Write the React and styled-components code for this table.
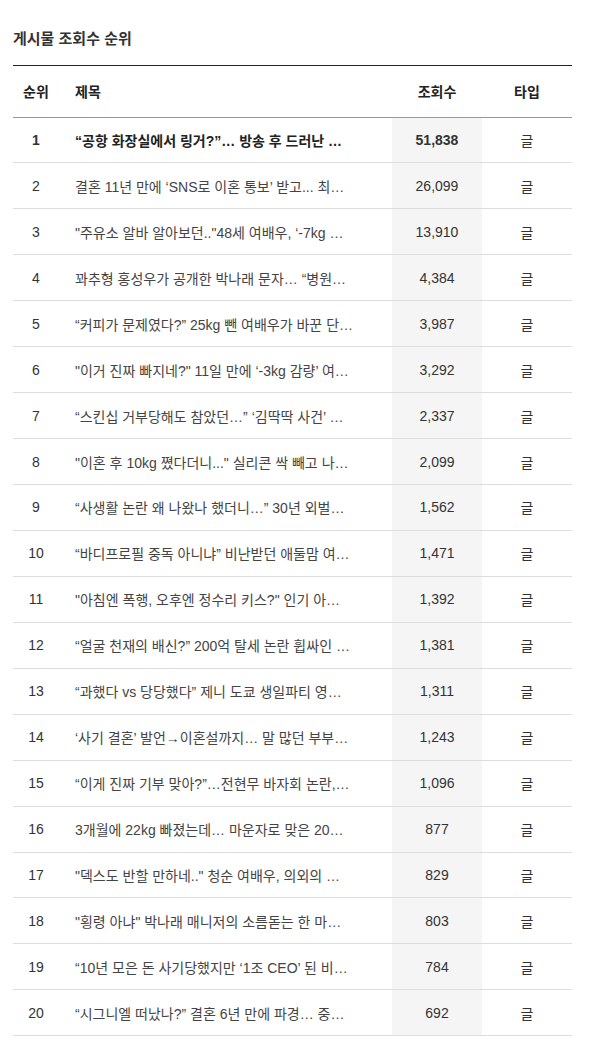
import React from 'react';
import styled, { createGlobalStyle } from 'styled-components';

const GlobalStyle = createGlobalStyle`
  body {
    margin: 0;
    background: #fff;
    font-family: "Liberation Sans", "Noto Sans CJK KR", Arial, sans-serif;
    color: #333;
  }
`;

const rows = [
  ['“공항 화장실에서 링거?”… 방송 후 드러난 …', '51,838'],
  ['결혼 11년 만에 ‘SNS로 이혼 통보’ 받고... 최…', '26,099'],
  ['"주유소 알바 알아보던.."48세 여배우, ‘-7kg …', '13,910'],
  ['꽈추형 홍성우가 공개한 박나래 문자… “병원…', '4,384'],
  ['“커피가 문제였다?” 25kg 뺀 여배우가 바꾼 단…', '3,987'],
  ['"이거 진짜 빠지네?" 11일 만에 ‘-3kg 감량’ 여…', '3,292'],
  ['“스킨십 거부당해도 참았던…” ‘김딱딱 사건’ …', '2,337'],
  ['"이혼 후 10kg 쪘다더니..." 실리콘 싹 빼고 나…', '2,099'],
  ['“사생활 논란 왜 나왔나 했더니…” 30년 외벌…', '1,562'],
  ['“바디프로필 중독 아니냐” 비난받던 애둘맘 여…', '1,471'],
  ['"아침엔 폭행, 오후엔 정수리 키스?" 인기 아…', '1,392'],
  ['“얼굴 천재의 배신?” 200억 탈세 논란 휩싸인 …', '1,381'],
  ['“과했다 vs 당당했다” 제니 도쿄 생일파티 영…', '1,311'],
  ['‘사기 결혼’ 발언→이혼설까지… 말 많던 부부…', '1,243'],
  ['“이게 진짜 기부 맞아?”…전현무 바자회 논란,…', '1,096'],
  ['3개월에 22kg 빠졌는데… 마운자로 맞은 20…', '877'],
  ['"덱스도 반할 만하네.." 청순 여배우, 의외의 …', '829'],
  ['"횡령 아냐" 박나래 매니저의 소름돋는 한 마…', '803'],
  ['“10년 모은 돈 사기당했지만 ‘1조 CEO’ 된 비…', '784'],
  ['“시그니엘 떠났나?” 결혼 6년 만에 파경… 중…', '692'],
];

const Page = styled.div`
  padding: 30px 24px 40px 13px;
`;

const Heading = styled.h2`
  margin: 0 0 17px;
  font-size: 15px;
  font-weight: 700;
  color: #333;
  line-height: 18px;
`;

const Table = styled.table`
  width: 559px;
  border-collapse: collapse;
  table-layout: fixed;
  border-top: 1px solid #222;
`;

const HeadCell = styled.th`
  height: 50.5px;
  padding: 0;
  padding-left: ${p => (p.$align === 'left' ? '16px' : '0')};
  text-align: ${p => p.$align || 'center'};
  font-size: 14px;
  font-weight: 700;
  color: #222;
  border-bottom: 1px solid #999;
`;

const Row = styled.tr`
  border-bottom: 1px solid #ddd;
`;

const Cell = styled.td`
  height: 44.95px;
  padding: 0;
  text-align: center;
  font-size: 14px;
  color: #333;
  font-weight: ${p => (p.$bold ? 700 : 400)};
`;

const TitleCell = styled(Cell)`
  text-align: left;
  padding: 0 16px;
  white-space: nowrap;
  overflow: hidden;
  text-overflow: ellipsis;
  color: ${p => (p.$bold ? '#222' : '#444')};
`;

const ViewsCell = styled(Cell)`
  background: #f5f5f5;
`;

const App = () => (
  <Page>
    <GlobalStyle />
    <Heading>게시물 조회수 순위</Heading>
    <Table>
      <colgroup>
        <col style={{ width: 46 }} />
        <col />
        <col style={{ width: 90 }} />
        <col style={{ width: 90 }} />
      </colgroup>
      <thead>
        <tr>
          <HeadCell>순위</HeadCell>
          <HeadCell $align="left">제목</HeadCell>
          <HeadCell>조회수</HeadCell>
          <HeadCell>타입</HeadCell>
        </tr>
      </thead>
      <tbody>
        {rows.map(([title, views], i) => (
          <Row key={i}>
            <Cell $bold={i === 0}>{i + 1}</Cell>
            <TitleCell $bold={i === 0}>{title}</TitleCell>
            <ViewsCell $bold={i === 0}>{views}</ViewsCell>
            <Cell>글</Cell>
          </Row>
        ))}
      </tbody>
    </Table>
  </Page>
);

export default App;
